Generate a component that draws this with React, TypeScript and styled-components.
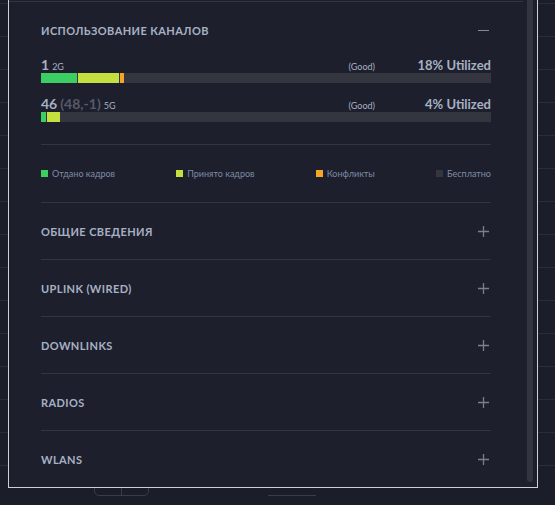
import React from "react";
import styled, { createGlobalStyle } from "styled-components";

const GlobalStyle = createGlobalStyle`
  html, body {
    margin: 0;
    padding: 0;
    background: #1b1d28;
    font-family: Lato, "Noto Sans", sans-serif;
    overflow: hidden;
  }
`;

const Page = styled.div`
  position: relative;
  width: 555px;
  height: 505px;
  overflow: hidden;
  background: #1b1d28;
`;

const Table = styled.div`
  padding-top: 3px;
`;

const TableRow = styled.div`
  height: 32px;
  border-top: 1px solid #2a2c37;
`;

const Footer = styled.div`
  display: flex;
  align-items: flex-start;
  border-top: 1px solid #2a2c37;
  padding: 9px 0 0 94px;
  gap: 119px;
`;

const PagerGroup = styled.div`
  display: flex;
  width: 55px;
  height: 21px;
  border: 1px solid #3a3c48;
  border-radius: 5px;
  box-sizing: border-box;
`;

const PagerButton = styled.div<{ $divider?: boolean }>`
  flex: 1;
  border-left: ${(p) => (p.$divider ? "1px solid #3a3c48" : "none")};
`;

const PageInput = styled.div`
  width: 48px;
  height: 20px;
  border-bottom: 1px solid #3a3c48;
`;

/* modal panel lies over the table */
const Panel = styled.div`
  position: absolute;
  left: 8px;
  top: 0;
  width: 530px;
  height: 488px;
  box-sizing: border-box;
  border: 1px solid #cfd0d5;
  border-top: none;
  background: #1d1f2c;
  display: flex;
`;

const Content = styled.div`
  flex: 1;
  padding: 0 32px;
  border-top: 1px solid #33353f;
  margin-top: 1px;
  overflow: hidden;
`;

const Gutter = styled.div`
  width: 14px;
  display: flex;
  justify-content: center;
`;

const Thumb = styled.div`
  width: 6px;
  height: 482px;
  background: #33353f;
  border-radius: 0 0 3px 3px;
`;

const SectionHeader = styled.div`
  height: 56px;
  display: flex;
  align-items: center;
  justify-content: space-between;
`;

const Title = styled.div`
  font-size: 11px;
  font-weight: 700;
  letter-spacing: 0.4px;
  text-transform: uppercase;
  color: #a7b1c4;
`;

const Section = styled.div`
  border-top: 1px solid #33353f;
`;

const Channels = styled.div`
  padding-bottom: 22px;
`;

const ChannelRow = styled.div<{ $first?: boolean }>`
  margin-top: ${(p) => (p.$first ? "0" : "14px")};
`;

const ChannelInfo = styled.div`
  display: flex;
  align-items: baseline;
  height: 15px;
  line-height: 13px;
`;

const ChannelNum = styled.span`
  font-size: 14px;
  font-weight: 700;
  color: #a7b1c4;
`;

const ChannelAlt = styled.span`
  font-size: 14px;
  font-weight: 700;
  color: #555a69;
  margin-left: 3px;
`;

const Band = styled.span`
  font-size: 9px;
  color: #a7b1c4;
  margin-left: 3px;
`;

const Quality = styled.span`
  font-size: 9px;
  color: #a7b1c4;
  margin-left: auto;
`;

const Utilized = styled.span`
  width: 116px;
  text-align: right;
  font-size: 13px;
  font-weight: 700;
  color: #a7b1c4;
`;

const Bar = styled.div`
  display: flex;
  height: 10px;
  background: #33353f;
`;

const Segment = styled.div<{ $color: string }>`
  background: ${(p) => p.$color};
  margin-right: 1px;
`;

const Legend = styled.div`
  height: 58px;
  display: flex;
  align-items: center;
  justify-content: space-between;
  border-top: 1px solid #33353f;
  box-sizing: border-box;
`;

const LegendItem = styled.div`
  display: flex;
  align-items: center;
  gap: 4px;
  font-size: 9px;
  color: #7d8ba5;
`;

const Swatch = styled.span<{ $color: string }>`
  width: 7px;
  height: 7px;
  background: ${(p) => p.$color};
`;

const IconWrap = styled.div`
  width: 11px;
  height: 11px;
  margin-right: 2px;
  display: flex;
`;

const GREEN = "#3dce63";
const YELLOW = "#c3e03f";
const ORANGE = "#f6a524";
const FREE = "#33353f";

const Plus = () => (
  <IconWrap>
    <svg width="11" height="11" viewBox="0 0 11 11">
      <path d="M5.5 0v11M0 5.5h11" stroke="#7b7f8c" strokeWidth="1.3" />
    </svg>
  </IconWrap>
);

const Minus = () => (
  <IconWrap>
    <svg width="11" height="11" viewBox="0 0 11 11">
      <path d="M0 5.5h11" stroke="#868a97" strokeWidth="1" />
    </svg>
  </IconWrap>
);

const channels = [
  {
    num: "1",
    alt: "",
    band: "2G",
    quality: "(Good)",
    util: "18% Utilized",
    parts: [
      { color: GREEN, width: 36 },
      { color: YELLOW, width: 41 },
      { color: ORANGE, width: 4 },
    ],
  },
  {
    num: "46",
    alt: "(48,-1)",
    band: "5G",
    quality: "(Good)",
    util: "4% Utilized",
    parts: [
      { color: GREEN, width: 5 },
      { color: YELLOW, width: 13 },
    ],
  },
];

const legend = [
  { color: GREEN, label: "Отдано кадров" },
  { color: YELLOW, label: "Принято кадров" },
  { color: ORANGE, label: "Конфликты" },
  { color: FREE, label: "Бесплатно" },
];

const sections = ["Общие сведения", "Uplink (Wired)", "Downlinks", "Radios", "WLANs"];

export default function App() {
  return (
    <Page>
      <GlobalStyle />
      <Table>
        {Array.from({ length: 14 }).map((_, i) => (
          <TableRow key={i} />
        ))}
        <Footer>
          <PagerGroup>
            <PagerButton />
            <PagerButton $divider />
          </PagerGroup>
          <PageInput />
        </Footer>
      </Table>

      <Panel>
        <Content>
          <SectionHeader>
            <Title>Использование каналов</Title>
            <Minus />
          </SectionHeader>
          <Channels>
            {channels.map((c, i) => (
              <ChannelRow key={c.num} $first={i === 0}>
                <ChannelInfo>
                  <ChannelNum>{c.num}</ChannelNum>
                  {c.alt && <ChannelAlt>{c.alt}</ChannelAlt>}
                  <Band>{c.band}</Band>
                  <Quality>{c.quality}</Quality>
                  <Utilized>{c.util}</Utilized>
                </ChannelInfo>
                <Bar>
                  {c.parts.map((p, j) => (
                    <Segment key={j} $color={p.color} style={{ width: p.width }} />
                  ))}
                </Bar>
              </ChannelRow>
            ))}
          </Channels>
          <Legend>
            {legend.map((l) => (
              <LegendItem key={l.label}>
                <Swatch $color={l.color} />
                {l.label}
              </LegendItem>
            ))}
          </Legend>
          {sections.map((s) => (
            <Section key={s}>
              <SectionHeader>
                <Title>{s}</Title>
                <Plus />
              </SectionHeader>
            </Section>
          ))}
        </Content>
        <Gutter>
          <Thumb />
        </Gutter>
      </Panel>
    </Page>
  );
}
